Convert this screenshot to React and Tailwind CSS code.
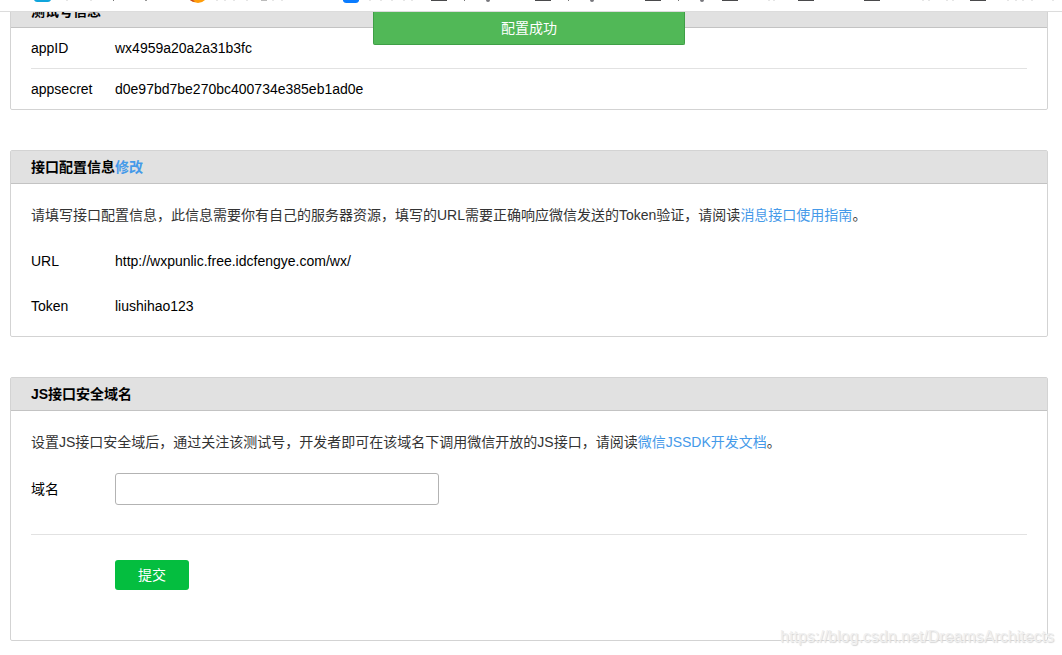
const Panel = ({ title, children }) => (
  <section className="rounded-xs border border-[#d3d3d3] bg-white">
    <h2 className="h-[33px] border-b border-[#c3c3c3] bg-[#e1e1e1] px-5 text-sm leading-8 font-bold text-black">
      {title}
    </h2>
    {children}
  </section>
);

const TextLink = ({ children }) => (
  <a href="#" className="text-[#459ae9]">
    {children}
  </a>
);

const Row = ({ label, value, className }) => (
  <div className={`flex items-center ${className}`}>
    <dt className="w-[84px] shrink-0">{label}</dt>
    <dd>{value}</dd>
  </div>
);

const folders = [431, 535, 645, 722, 798, 864, 970];
const stems = [464, 568, 678];
const hooks = [486, 590, 700];
const faint = [66, 90, 216, 224, 233, 246, 272, 281, 369, 380, 391, 403, 411, 768, 773, 922, 928, 946, 952, 1007, 1015, 1022, 1031, 1052];

// lower edge of the bookmarks bar, the rest is scrolled out of the window
const BookmarksBar = () => (
  <header className="h-3 overflow-hidden border-b border-[#dcdcdc] bg-white">
    <svg width="1062" height="11" aria-hidden="true">
      <path d="M34 0h17q-1 2-3 2H37q-2 0-3-2z" fill="#10a5dc" />
      <path d="M190 0h15q-3 3-7 3t-8-3z" fill="#ff9d0a" />
      <path d="M190 0h3l2 2q-3 0-5-2z" fill="#c9491c" />
      <path d="M343 0h16v1q-1 2-3 2h-10q-2 0-3-2z" fill="#0a7cff" />
      {folders.map((x) => (
        <rect key={x} x={x} y="0" width="16" height="1" fill="#4a4a4c" />
      ))}
      {stems.map((x) => (
        <rect key={x} x={x} y="0" width="1" height="1" fill="#777" />
      ))}
      {hooks.map((x) => (
        <path key={x} d={`M${x} 0h4q0 2-2 2t-2-2z`} fill="#77777c" />
      ))}
      <rect x="113" y="0" width="1" height="1" fill="#777" />
      <rect x="145" y="0" width="2" height="1" fill="#999" />
      <rect x="261" y="0" width="6" height="1" fill="#bbb" />
      {faint.map((x) => (
        <rect key={x} x={x} y="0" width="2" height="1" fill="#e6e6e6" />
      ))}
    </svg>
  </header>
);

export default function App() {
  return (
    <div className="relative min-h-screen overflow-hidden bg-white font-['Liberation_Sans','Noto_Sans_CJK_SC',sans-serif] text-sm text-black">
      <BookmarksBar />
      <main className="relative mr-[14px] ml-[10px]">
        <div className="overflow-hidden">
          <div className="-mt-[18px] flex flex-col gap-10">
            <Panel title="测试号信息">
              <dl className="px-5">
                <Row label="appID" value="wx4959a20a2a31b3fc" className="h-[41px] border-b border-[#e2e2e2]" />
                <Row label="appsecret" value="d0e97bd7be270bc400734e385eb1ad0e" className="h-10" />
              </dl>
            </Panel>

            <Panel
              title={
                <>
                  接口配置信息<TextLink>修改</TextLink>
                </>
              }
            >
              <div className="px-5 pt-5 pb-2">
                <p className="mb-3 leading-[22px] text-[#333]">
                  请填写接口配置信息，此信息需要你有自己的服务器资源，填写的URL需要正确响应微信发送的Token验证，请阅读
                  <TextLink>消息接口使用指南</TextLink>。
                </p>
                <dl>
                  <Row label="URL" value="http://wxpunlic.free.idcfengye.com/wx/" className="h-[45px]" />
                  <Row label="Token" value="liushihao123" className="h-[45px]" />
                </dl>
              </div>
            </Panel>

            <Panel title="JS接口安全域名">
              <form className="px-5 pt-5 pb-[50px]" onSubmit={(e) => e.preventDefault()}>
                <p className="mb-3 leading-[22px] text-[#333]">
                  设置JS接口安全域后，通过关注该测试号，开发者即可在该域名下调用微信开放的JS接口，请阅读
                  <TextLink>微信JSSDK开发文档</TextLink>。
                </p>
                <div className="flex items-center border-b border-[#e2e2e2] pt-2 pb-[29px]">
                  <label htmlFor="domain" className="w-[84px] shrink-0">
                    域名
                  </label>
                  <input
                    id="domain"
                    type="text"
                    className="h-8 w-[324px] rounded-[3px] border border-[#b3b3b3] bg-white px-2 outline-none"
                  />
                </div>
                <button type="submit" className="mt-[25px] ml-[84px] block h-[30px] w-[74px] rounded-[3px] bg-[#04be3f] text-white">
                  提交
                </button>
              </form>
            </Panel>
          </div>
        </div>

        <div
          role="status"
          className="absolute top-0 left-1/2 h-[33px] w-[312px] -translate-x-1/2 rounded-b-xs border border-t-0 border-[#3f9f46] bg-[#51b857] text-center leading-8 text-white"
        >
          配置成功
        </div>
      </main>
      <span className="absolute right-2 bottom-1.5 text-base text-[#f0f0f0] [text-shadow:1px_1px_1px_#d6d6d6]">
        https://blog.csdn.net/DreamsArchitects
      </span>
    </div>
  );
}
